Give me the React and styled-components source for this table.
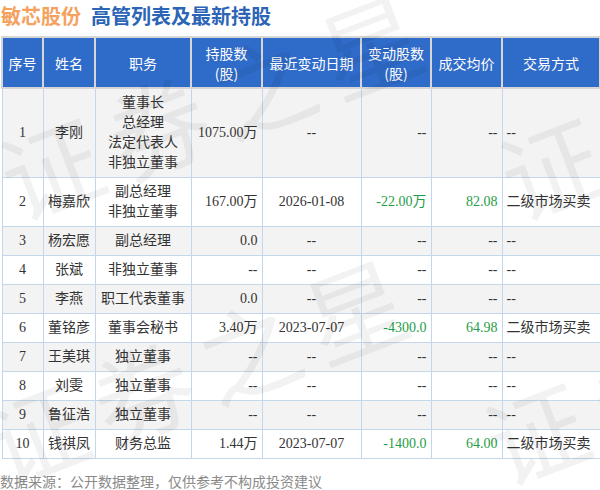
import React from 'react';
import styled, { createGlobalStyle } from 'styled-components';

const GlobalStyle = createGlobalStyle`
  body {
    margin: 0;
    background: #ffffff;
    font-family: "Liberation Serif", "Noto Sans CJK SC", serif;
  }
`;

const Page = styled.div`
  position: relative;
  width: 600px;
  height: 490px;
  overflow: hidden;
`;

const TitleBar = styled.div`
  display: flex;
  align-items: center;
  gap: 10px;
  height: 30px;
  margin-bottom: 6px;
  padding-left: 1px;
  font-family: "Noto Sans CJK SC", sans-serif;
  font-size: 20px;
  font-weight: 700;
`;

const TitleText = styled.span`
  color: ${p => p.$tone === 'orange' ? '#f5a25f' : '#2c64b6'};
`;

const Table = styled.table`
  width: 598px;
  margin-left: 1px;
  border-collapse: collapse;
  table-layout: fixed;
  font-size: 14px;
  color: #333333;
`;

const Th = styled.th`
  background: #2f6bc9;
  color: #ffffff;
  font-family: "Noto Sans CJK SC", sans-serif;
  font-weight: 400;
  font-size: 14px;
  line-height: 20px;
  padding: 5px 2px 4px;
  border: 2px solid #d6d6d6;
  text-align: center;
`;

const Tr = styled.tr`
  background: ${p => p.$shade ? '#f3f3f3' : '#ffffff'};
`;

const Td = styled.td`
  border: 1px solid #c3d6ea;
  line-height: 20px;
  padding: 4px 4px;
  text-align: ${p => p.$align || 'center'};
  color: ${p => p.$green ? '#1f9e48' : '#333333'};
  white-space: nowrap;
`;

const Footer = styled.div`
  margin-top: 12px;
  font-family: "Noto Sans CJK SC", sans-serif;
  font-size: 14px;
  line-height: 20px;
  color: #8a8a8a;
`;

const Watermark = styled.div`
  position: absolute;
  inset: 0;
  pointer-events: none;
  z-index: 2;
`;

const Mark = styled.span`
  position: absolute;
  left: ${p => p.$x}px;
  top: ${p => p.$y}px;
  font-family: "Noto Sans CJK SC", sans-serif;
  font-size: 100px;
  line-height: 100px;
  letter-spacing: 14px;
  white-space: nowrap;
  color: rgba(0, 0, 0, 0.05);
  transform-origin: 50px 50px;
  transform: rotate(-21deg);
`;

const widths = [41, 52, 96, 71, 99, 70, 71, 98];

const rows = [
  ['1', '李刚', ['董事长', '总经理', '法定代表人', '非独立董事'], '1075.00万', '--', '--', '--', '--'],
  ['2', '梅嘉欣', ['副总经理', '非独立董事'], '167.00万', '2026-01-08', '-22.00万', '82.08', '二级市场买卖'],
  ['3', '杨宏愿', ['副总经理'], '0.0', '--', '--', '--', '--'],
  ['4', '张斌', ['非独立董事'], '--', '--', '--', '--', '--'],
  ['5', '李燕', ['职工代表董事'], '0.0', '--', '--', '--', '--'],
  ['6', '董铭彦', ['董事会秘书'], '3.40万', '2023-07-07', '-4300.0', '64.98', '二级市场买卖'],
  ['7', '王美琪', ['独立董事'], '--', '--', '--', '--', '--'],
  ['8', '刘雯', ['独立董事'], '--', '--', '--', '--', '--'],
  ['9', '鲁征浩', ['独立董事'], '--', '--', '--', '--', '--'],
  ['10', '钱祺凤', ['财务总监'], '1.44万', '2023-07-07', '-1400.0', '64.00', '二级市场买卖'],
];

const marks = [
  { x: 0, y: 115 },
  { x: 500, y: 115 },
  { x: -15, y: 380 },
  { x: 485, y: 380 },
];

export default function App() {
  return (
    <Page>
      <GlobalStyle />
      <TitleBar>
        <TitleText $tone="orange">敏芯股份</TitleText>
        <TitleText>高管列表及最新持股</TitleText>
      </TitleBar>
      <Table>
        <colgroup>
          {widths.map((w, i) => <col key={i} style={{ width: w }} />)}
        </colgroup>
        <thead>
          <tr>
            <Th>序号</Th>
            <Th>姓名</Th>
            <Th>职务</Th>
            <Th>持股数<br />(股)</Th>
            <Th>最近变动日期</Th>
            <Th>变动股数<br />(股)</Th>
            <Th>成交均价</Th>
            <Th>交易方式</Th>
          </tr>
        </thead>
        <tbody>
          {rows.map((r, i) => {
            const hasTrade = r[5] !== '--';
            return (
              <Tr key={r[0]} $shade={i % 2 === 0}>
                <Td>{r[0]}</Td>
                <Td>{r[1]}</Td>
                <Td>{r[2].map((t, j) => <div key={j}>{t}</div>)}</Td>
                <Td $align="right">{r[3]}</Td>
                <Td>{r[4]}</Td>
                <Td $align="right" $green={hasTrade}>{r[5]}</Td>
                <Td $align="right" $green={hasTrade}>{r[6]}</Td>
                <Td $align="left">{r[7]}</Td>
              </Tr>
            );
          })}
        </tbody>
      </Table>
      <Footer>数据来源：公开数据整理，仅供参考不构成投资建议</Footer>
      <Watermark>
        {marks.map((m, i) => <Mark key={i} $x={m.x} $y={m.y}>证券之星</Mark>)}
      </Watermark>
    </Page>
  );
}
